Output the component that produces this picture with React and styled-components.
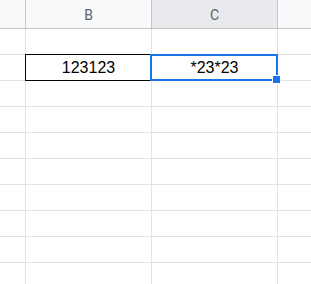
import React from "react"
import styled, { createGlobalStyle } from "styled-components"

const GlobalStyle = createGlobalStyle`
  body {
    margin: 0;
    background: #fff;
    font-family: "Liberation Sans", Arial, sans-serif;
  }
`

const columns = [
  { key: "corner", label: "", width: 26 },
  { key: "B", label: "B", width: 126 },
  { key: "C", label: "C", width: 126, selected: true },
  { key: "D", label: "", width: 60 },
]

const rows = [
  { id: 1, cells: {} },
  { id: 2, cells: { B: "123123", C: "*23*23" }, outlined: "B", active: "C" },
  { id: 3, cells: {} },
  { id: 4, cells: {} },
  { id: 5, cells: {} },
  { id: 6, cells: {} },
  { id: 7, cells: {} },
  { id: 8, cells: {} },
  { id: 9, cells: {} },
  { id: 10, cells: {} },
]

const Sheet = styled.div`
  width: 311px;
  height: 284px;
  overflow: hidden;
  display: flex;
  flex-direction: column;
`

const HeaderRow = styled.div`
  display: flex;
  height: 29px;
  flex: none;
  border-bottom: 1px solid #c4c7c5;
  box-sizing: border-box;
`

const HeaderCell = styled.div`
  flex: none;
  width: ${p => p.$w}px;
  box-sizing: border-box;
  border-right: 1px solid #c4c7c5;
  background: ${p => p.$selected ? "#e8eaed" : "#f8f9fa"};
  color: #5f6368;
  font-family: Roboto, "Liberation Sans", Arial, sans-serif;
  font-size: 14px;
  display: flex;
  align-items: center;
  justify-content: center;
  padding-top: 1px;
`

const Row = styled.div`
  display: flex;
  height: 26px;
  flex: none;
`

const Cell = styled.div`
  position: relative;
  flex: none;
  width: ${p => p.$w}px;
  box-sizing: border-box;
  border-right: 1px solid #e2e2e2;
  border-bottom: 1px solid #e2e2e2;
  display: flex;
  align-items: center;
  justify-content: center;
  font-size: 16px;
  color: #000;
  padding-top: 1px;
`

const Outline = styled.div`
  position: absolute;
  left: -1px;
  top: -1px;
  right: -1px;
  bottom: -1px;
  border: 1px solid #000;
  pointer-events: none;
`

const Active = styled.div`
  position: absolute;
  left: -2px;
  top: -1px;
  right: -1px;
  bottom: -1px;
  border: 2px solid #1a73e8;
  pointer-events: none;
  z-index: 2;
`

const Handle = styled.div`
  position: absolute;
  right: -5px;
  bottom: -5px;
  width: 7px;
  height: 7px;
  background: #1a73e8;
  border: 1px solid #fff;
`

const App = () => (
  <>
    <GlobalStyle />
    <Sheet>
      <HeaderRow>
        {columns.map(col =>
          <HeaderCell key={col.key} $w={col.width} $selected={col.selected}>
            {col.label}
          </HeaderCell>
        )}
      </HeaderRow>
      {rows.map(row =>
        <Row key={row.id}>
          {columns.map(col =>
            <Cell key={col.key} $w={col.width}>
              {row.cells[col.key]}
              {row.outlined === col.key && <Outline />}
              {row.active === col.key && <Active><Handle /></Active>}
            </Cell>
          )}
        </Row>
      )}
    </Sheet>
  </>
)

export default App
